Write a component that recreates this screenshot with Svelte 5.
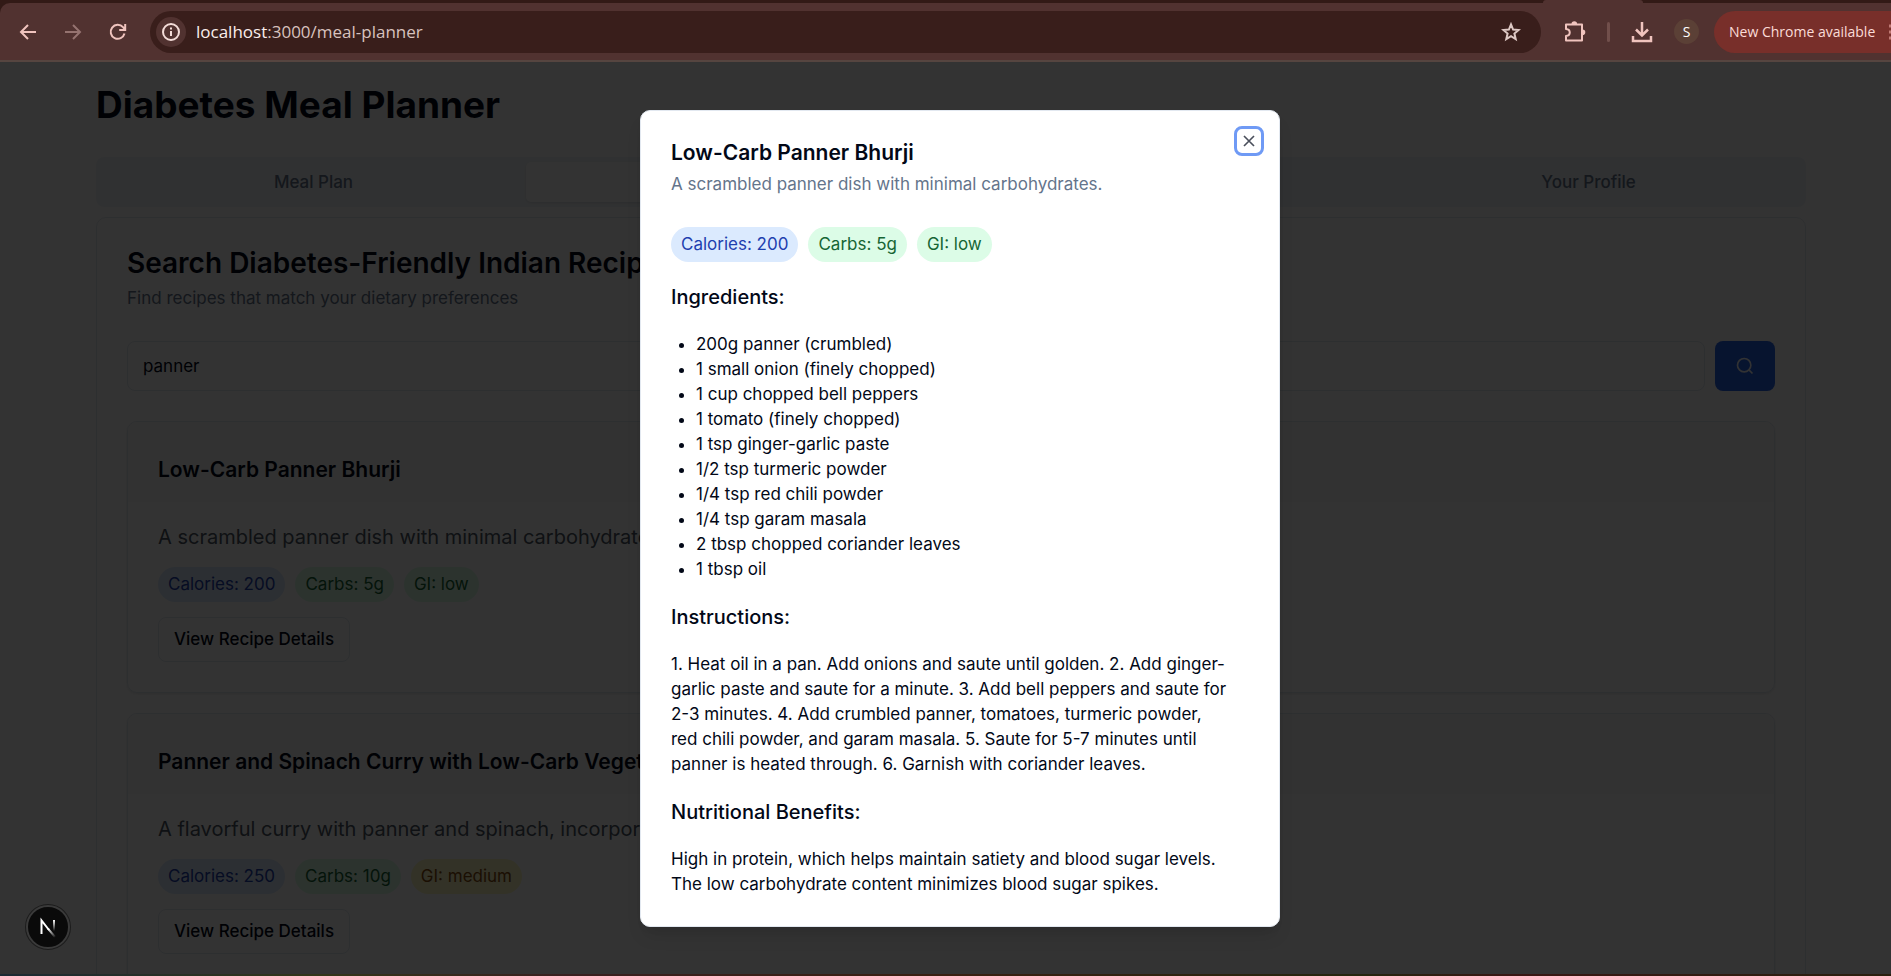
<script>
  let query = $state('panner');
  let open = $state(true);

  const tabs = ['Meal Plan', 'Recipe Search', 'Food Log', 'Your Profile'];

  const recipes = [
    {
      title: 'Low-Carb Panner Bhurji',
      text: 'A scrambled panner dish with minimal carbohydrates.',
      calories: '200',
      carbs: '5g',
      gi: 'low'
    },
    {
      title: 'Panner and Spinach Curry with Low-Carb Vegetables',
      text: 'A flavorful curry with panner and spinach, incorporating low-carb vegetables.',
      calories: '250',
      carbs: '10g',
      gi: 'medium'
    }
  ];

  const ingredients = [
    '200g panner (crumbled)',
    '1 small onion (finely chopped)',
    '1 cup chopped bell peppers',
    '1 tomato (finely chopped)',
    '1 tsp ginger-garlic paste',
    '1/2 tsp turmeric powder',
    '1/4 tsp red chili powder',
    '1/4 tsp garam masala',
    '2 tbsp chopped coriander leaves',
    '1 tbsp oil'
  ];
</script>

{#snippet pills(recipe)}
  <div class="pills">
    <span class="pill blue">Calories: {recipe.calories}</span>
    <span class="pill green">Carbs: {recipe.carbs}</span>
    <span class="pill" class:green={recipe.gi === 'low'} class:yellow={recipe.gi === 'medium'}>GI: {recipe.gi}</span>
  </div>
{/snippet}

<div class="window">
  <header class="browser">
    <div class="tabstrip"><span></span></div>
    <div class="toolbar">
      <nav class="history">
        <button aria-label="Back">
          <svg width="20" height="20" viewBox="0 0 20 20"><path d="M18 10H3.5M10 3 3 10l7 7" /></svg>
        </button>
        <button aria-label="Forward" class="off">
          <svg width="20" height="20" viewBox="0 0 20 20"><path d="M2 10h14.500M10 3l7 7-7 7" /></svg>
        </button>
        <button aria-label="Reload">
          <svg width="20" height="20" viewBox="0 0 20 20"><path d="M16.500 11.500A7 7 0 1 1 15 5.200L17 7.500M17.200 2v6h-6" /></svg>
        </button>
      </nav>
      <div class="address">
        <button class="info" aria-label="Site information">
          <svg width="20" height="20" viewBox="0 0 20 20"><circle cx="10" cy="10" r="8" /><path d="M10 9v5M10 5.500v2" /></svg>
        </button>
        <span class="url"><b>localhost</b>:3000/meal-planner</span>
        <button class="star" aria-label="Bookmark">
          <svg width="20" height="20" viewBox="0 0 20 20"><path d="m10 2.400 2.100 5.200 5.500.4-4.200 3.600 1.300 5.500L10 14.100l-4.700 3 1.300-5.500L2.400 8l5.500-.4z" /></svg>
        </button>
      </div>
      <div class="tools">
        <button aria-label="Extensions">
          <svg width="24" height="24" viewBox="0 0 24 24"><path d="M3 4.500h16v16H3V16c5-.5 5-6.500 0-7z" stroke-linejoin="round" /><path d="M8.500 4a2.800 2.800 0 0 1 5.600 0zM19.500 9.500a2.800 2.800 0 0 1 0 5.600z" class="solid" /></svg>
        </button>
        <i class="rule"></i>
        <button aria-label="Downloads">
          <svg width="24" height="24" viewBox="0 0 24 24"><path d="M12 2v13M6 9.500l6 6 6-6M3 16v5h18v-5" stroke-width="2.500" /></svg>
        </button>
        <button class="avatar" aria-label="Profile">S</button>
      </div>
      <button class="update">
        New Chrome available
        <svg width="3" height="20" viewBox="0 0 3 20"><path d="M1 4h2M1 10h2M1 16h2" stroke-width="3" /></svg>
      </button>
    </div>
  </header>

  <div class="page">
    <main>
      <h1>Diabetes Meal Planner</h1>
      <div class="tabs" role="tablist">
        {#each tabs as tab, i}
          <button role="tab" aria-selected={i === 1} class:active={i === 1}>{tab}</button>
        {/each}
      </div>
      <section class="panel">
        <h2>Search Diabetes-Friendly Indian Recipes</h2>
        <p class="muted">Find recipes that match your dietary preferences</p>
        <form class="search" onsubmit={(e) => e.preventDefault()}>
          <input type="text" aria-label="Search recipes" bind:value={query} />
          <button aria-label="Search">
            <svg width="20" height="20" viewBox="0 0 24 24"><circle cx="11" cy="11" r="8" /><path d="m21 21-4.300-4.300" /></svg>
          </button>
        </form>
        <div class="results">
          {#each recipes as recipe}
            <article>
              <h3>{recipe.title}</h3>
              <div class="body">
                <p>{recipe.text}</p>
                {@render pills(recipe)}
                <button class="outline" onclick={() => (open = true)}>View Recipe Details</button>
              </div>
            </article>
          {/each}
        </div>
      </section>
    </main>

    {#if open}
      <div class="overlay">
        <div class="modal" role="dialog" aria-modal="true" aria-labelledby="recipe-title">
          <h3 id="recipe-title">{recipes[0].title}</h3>
          <p class="muted">{recipes[0].text}</p>
          {@render pills(recipes[0])}
          <h4>Ingredients:</h4>
          <ul>
            {#each ingredients as item}
              <li>{item}</li>
            {/each}
          </ul>
          <h4>Instructions:</h4>
          <p class="prose">
            1. Heat oil in a pan. Add onions and saute until golden. 2. Add ginger-garlic paste and saute for a
            minute. 3. Add bell peppers and saute for 2-3 minutes. 4. Add crumbled panner, tomatoes, turmeric
            powder, red chili powder, and garam masala. 5. Saute for 5-7 minutes until panner is heated through.
            6. Garnish with coriander leaves.
          </p>
          <h4>Nutritional Benefits:</h4>
          <p class="prose">
            High in protein, which helps maintain satiety and blood sugar levels. The low carbohydrate content
            minimizes blood sugar spikes.
          </p>
          <button class="close" aria-label="Close" onclick={() => (open = false)}>
            <svg width="20" height="20" viewBox="0 0 24 24"><path d="M18 6 6 18M6 6l12 12" /></svg>
          </button>
        </div>
      </div>
    {/if}

    <button class="devtools" aria-label="Open developer tools">
      <svg width="46" height="46" viewBox="0 0 46 46">
        <defs>
          <linearGradient id="diag" x1="24" y1="24" x2="31" y2="33" gradientUnits="userSpaceOnUse">
            <stop stop-color="#fff" /><stop offset="1" stop-color="#fff" stop-opacity="0" />
          </linearGradient>
          <linearGradient id="stem" x1="0" y1="16" x2="0" y2="27" gradientUnits="userSpaceOnUse">
            <stop stop-color="#fff" /><stop offset="1" stop-color="#fff" stop-opacity="0" />
          </linearGradient>
        </defs>
        <circle cx="23" cy="23" r="22" fill="#0a0a0a" stroke="#1c1c1c" stroke-width="2" />
        <circle cx="23" cy="23" r="21" fill="none" stroke="#3a3a3a" />
        <path d="M16.500 30V16.500L24 26" fill="none" stroke="#fff" stroke-width="2" />
        <path d="M23 24.700 30 33" fill="none" stroke="url(#diag)" stroke-width="2" />
        <path d="M28 16h2v11h-2z" fill="url(#stem)" stroke="none" />
      </svg>
    </button>
  </div>
  <div class="taskbar"></div>
</div>

<style>
  :global(body) {
    margin: 0;
    background: #333;
  }
  :global(*) {
    box-sizing: border-box;
  }
  .window {
    display: flex;
    flex-direction: column;
    height: 100vh;
    overflow: hidden;
    font: 400 17px/25px Inter, sans-serif;
    color: #020817;
  }
  button,
  input {
    font: inherit;
    color: inherit;
    margin: 0;
    padding: 0;
    border: 0;
    background: none;
  }
  h1, h2, h3, h4, p, ul {
    margin: 0;
  }
  svg {
    display: block;
    fill: none;
    stroke: currentColor;
    stroke-width: 2;
  }

  /* browser frame */
  .browser {
    flex: none;
    background: #321a16;
    border-bottom: 2px solid #564540;
  }
  .tabstrip {
    display: flex;
    height: 3px;
    justify-content: flex-end;
    padding-right: 248px;
  }
  .tabstrip span {
    width: 100px;
    background: #513230;
    border-radius: 8px 8px 0 0;
  }
  .toolbar {
    display: flex;
    align-items: center;
    height: 57px;
    background: #513230;
    border-radius: 10px 0 0 0;
    color: #f0c4be;
    font: 400 14px/20px 'Open Sans', sans-serif;
  }
  .history {
    display: flex;
    gap: 25px;
    padding: 0 22px 0 18px;
  }
  .history .off {
    color: #957370;
  }
  .address {
    display: flex;
    flex: 1;
    align-items: center;
    height: 42px;
    padding: 0 20px 0 6px;
    border-radius: 21px;
    background: #391e1b;
    color: #ddc8c4;
  }
  .info {
    display: grid;
    place-items: center;
    width: 30px;
    height: 30px;
    border-radius: 15px;
    background: #513230;
    color: #f3dcd8;
  }
  .url {
    flex: 1;
    padding-left: 10px;
    font-size: 17px;
    color: #d8c2be;
  }
  .url b {
    font-weight: 400;
    color: #fbeeec;
  }
  .tools {
    display: flex;
    align-items: center;
    gap: 20px;
    padding: 0 15px 0 22px;
  }
  .solid {
    fill: currentColor;
    stroke: none;
  }
  .rule {
    width: 3px;
    height: 20px;
    border-radius: 2px;
    background: #714f4b;
  }
  .avatar {
    width: 25px;
    height: 25px;
    border-radius: 13px;
    background: #5b4036;
    color: #fff;
  }
  .update {
    display: flex;
    flex: none;
    justify-content: space-between;
    align-items: center;
    height: 42px;
    width: 177px;
    padding-left: 15px;
    border-radius: 21px 0 0 21px;
    background: #782f2a;
    color: #fbdcd8;
    white-space: nowrap;
  }
  .update svg {
    color: #c07a74;
  }

  /* page */
  .page {
    position: relative;
    flex: 1;
    min-height: 0;
    overflow: hidden;
    background: #fff;
  }
  main {
    margin: 0 85px 0 96px;
    padding-top: 20px;
  }
  h1 {
    margin-bottom: 30px;
    font-size: 37px;
    line-height: 45px;
    font-weight: 700;
  }
  .tabs {
    display: grid;
    grid-template-columns: repeat(4, 1fr);
    height: 50px;
    padding: 5px;
    margin-bottom: 10px;
    border-radius: 8px;
    background: #f1f5f9;
    color: #64748b;
    font-weight: 500;
  }
  .tabs .active {
    border-radius: 5px;
    background: #fff;
    color: #020817;
    box-shadow: 0 1px 3px rgba(0, 0, 0, 0.1);
  }
  .panel {
    padding: 30px;
    border: 1px solid #e2e8f0;
    border-radius: 10px;
  }
  h2 {
    margin-bottom: 8px;
    font-size: 28px;
    line-height: 30px;
    font-weight: 600;
  }
  .muted {
    color: #64748b;
  }
  .search {
    display: flex;
    gap: 10px;
    margin: 30px 0;
  }
  .search input {
    flex: 1;
    height: 50px;
    padding: 0 15px;
    border: 1px solid #e2e8f0;
    border-radius: 8px;
  }
  .search button {
    display: grid;
    place-items: center;
    width: 60px;
    border-radius: 8px;
    background: #2563eb;
    color: #f8fafc;
  }
  .results {
    display: grid;
    gap: 20px;
  }
  article {
    border: 1px solid #e2e8f0;
    border-radius: 10px;
    overflow: hidden;
    box-shadow: 0 1px 3px rgba(0, 0, 0, 0.1);
  }
  h3 {
    font-size: 21px;
    font-weight: 600;
  }
  article h3 {
    padding: 30px 30px 15px;
    line-height: 35px;
    background: #f9fafb;
  }
  .body {
    display: grid;
    justify-items: start;
    gap: 15px;
    padding: 20px 30px 30px;
  }
  .body p {
    font-size: 20px;
    line-height: 30px;
    color: #4b5563;
  }
  .pills {
    display: flex;
    gap: 10px;
  }
  .pill {
    padding: 5px 10px;
    border-radius: 18px;
  }
  .blue {
    background: #dbeafe;
    color: #1e40af;
  }
  .green {
    background: #dcfce7;
    color: #166534;
  }
  .yellow {
    background: #fef9c3;
    color: #854d0e;
  }
  .outline {
    height: 45px;
    padding: 0 15px;
    border: 1px solid #e2e8f0;
    border-radius: 8px;
    font-weight: 500;
  }

  /* dialog */
  .overlay {
    position: absolute;
    inset: 0;
    display: grid;
    place-items: center;
    padding-left: 29px;
    background: rgba(0, 0, 0, 0.8);
  }
  .modal {
    position: relative;
    width: 640px;
    padding: 30px 30px 29px;
    border: 1px solid #e2e8f0;
    border-radius: 10px;
    background: #fff;
    box-shadow: 0 12px 18px -4px rgba(0, 0, 0, 0.1), 0 5px 8px -5px rgba(0, 0, 0, 0.1);
  }
  .modal h3 {
    margin-bottom: 7px;
    line-height: 24px;
  }
  .modal .pills {
    padding: 30px 0 20px;
  }
  h4 {
    margin-bottom: 20px;
    font-size: 20px;
    line-height: 30px;
    font-weight: 500;
  }
  ul {
    margin-bottom: 20px;
    padding-left: 25px;
  }
  .prose {
    max-width: 560px;
  }
  .prose + h4 {
    margin-top: 20px;
  }
  .close {
    position: absolute;
    top: 20px;
    right: 20px;
    border-radius: 3px;
    color: #4a4f5b;
    outline: 3px solid #6f9af5;
    outline-offset: 2px;
  }
  .devtools {
    position: absolute;
    left: 25px;
    bottom: 24px;
    border-radius: 23px;
  }
  .taskbar {
    flex: none;
    height: 2px;
    background: linear-gradient(90deg, #1c2a33, #33361a 17%, #3a2020 30%, #3a2012 50%, #25260f 72%, #3a1714 80%, #2a200f);
  }
</style>
